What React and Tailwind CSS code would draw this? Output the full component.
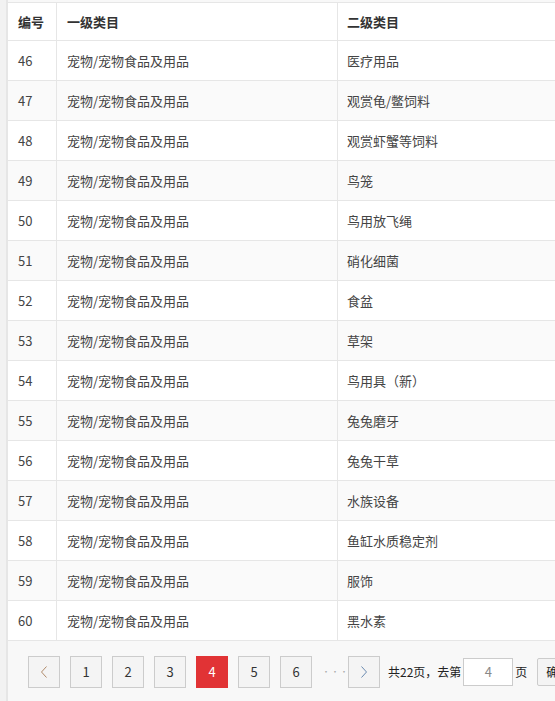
import React from "react";

const rows = [
  [46, "医疗用品"],
  [47, "观赏龟/鳖饲料"],
  [48, "观赏虾蟹等饲料"],
  [49, "鸟笼"],
  [50, "鸟用放飞绳"],
  [51, "硝化细菌"],
  [52, "食盆"],
  [53, "草架"],
  [54, "鸟用具（新）"],
  [55, "兔兔磨牙"],
  [56, "兔兔干草"],
  [57, "水族设备"],
  [58, "鱼缸水质稳定剂"],
  [59, "服饰"],
  [60, "黑水素"],
];

const font = { fontFamily: '"Microsoft YaHei", "Noto Sans CJK SC", "Noto Sans", sans-serif' };

function PageBtn({ children, active }) {
  return (
    <div
      className={
        "shrink-0 w-[32px] h-[32px] flex items-center justify-center text-[13px] border " +
        (active ? "bg-[#e13335] border-[#e13335] text-white" : "bg-[#f4f4f4] border-[#cccccc] text-[#333]")
      }
    >
      {children}
    </div>
  );
}

export default function App() {
  return (
    <div className="w-[555px] h-[701px] bg-[#f2f2f2] pl-[6px] overflow-hidden" style={font}>
      <div className="border-l-2 border-[#e6e6e6] h-full pt-[2px] bg-[#f8f8f8]">
        <div className="bg-white border-t border-[#e6e6e6] w-[600px]">
          <div className="grid grid-cols-[49px_281px_1fr] h-[38px] border-b border-[#e6e6e6] text-[13px] font-bold text-[#333]">
            <div className="border-r border-[#e6e6e6] pl-[10px] flex items-center">编号</div>
            <div className="border-r border-[#e6e6e6] pl-[10px] flex items-center">一级类目</div>
            <div className="pl-[9px] flex items-center">二级类目</div>
          </div>
          {rows.map(([id, name], i) => (
            <div
              key={id}
              className={
                "grid grid-cols-[49px_281px_1fr] h-[40px] border-b border-[#e6e6e6] text-[13px] text-[#444] " +
                (i % 2 === 1 ? "bg-[#fafafa]" : "bg-white")
              }
            >
              <div className="border-r border-[#e6e6e6] pl-[10px] flex items-center">{id}</div>
              <div className="border-r border-[#e6e6e6] pl-[10px] flex items-center">宠物/宠物食品及用品</div>
              <div className="pl-[9px] flex items-center">{name}</div>
            </div>
          ))}
        </div>
        <div className="flex items-center pl-[20px] pt-[15px] gap-[10px] text-[13px] text-[#333] whitespace-nowrap w-[700px]">
          <PageBtn>
            <svg width="10" height="14" viewBox="0 0 10 14" fill="none">
              <path d="M7.5 1.5L2.5 7l5 5.5" stroke="#b08a6a" strokeWidth="1" />
            </svg>
          </PageBtn>
          <PageBtn>1</PageBtn>
          <PageBtn>2</PageBtn>
          <PageBtn>3</PageBtn>
          <PageBtn active>4</PageBtn>
          <PageBtn>5</PageBtn>
          <PageBtn>6</PageBtn>
          <div className="shrink-0 w-[16px] text-center text-[#aaa] text-[8px] tracking-[1px]">···</div>
          <PageBtn>
            <svg width="10" height="14" viewBox="0 0 10 14" fill="none">
              <path d="M2.5 1.5L7.5 7l-5 5.5" stroke="#6a8ab0" strokeWidth="1" />
            </svg>
          </PageBtn>
          <div className="shrink-0 flex items-center -ml-[2px] text-[12px] text-[#222]">
            <span>共22页，去第</span>
            <div className="ml-[2px] w-[50px] h-[28px] border border-[#cccccc] bg-white flex items-center justify-center text-[13px] text-[#888]">4</div>
            <span className="ml-[2px]">页</span>
            <div className="ml-[10px] w-[50px] h-[28px] border border-[#cccccc] bg-[#f4f4f4] flex items-center pl-[8px] rounded-[2px]">确定</div>
          </div>
        </div>
      </div>
    </div>
  );
}
